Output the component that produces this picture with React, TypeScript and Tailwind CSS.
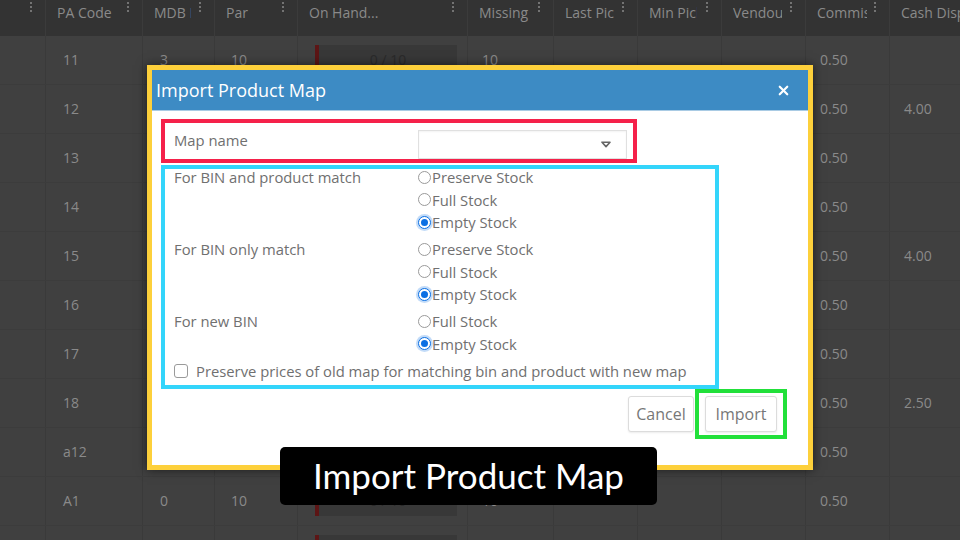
import { X } from 'lucide-react';

interface Row {
  pa: string;
  mdb: string;
  par: string;
  missing: string;
  commission: string;
  cash: string;
}

const rows: Row[] = [
  { pa: '11', mdb: '3', par: '10', missing: '10', commission: '0.50', cash: '' },
  { pa: '12', mdb: '3', par: '10', missing: '10', commission: '0.50', cash: '4.00' },
  { pa: '13', mdb: '3', par: '10', missing: '10', commission: '0.50', cash: '' },
  { pa: '14', mdb: '3', par: '10', missing: '10', commission: '0.50', cash: '' },
  { pa: '15', mdb: '3', par: '10', missing: '10', commission: '0.50', cash: '4.00' },
  { pa: '16', mdb: '3', par: '10', missing: '10', commission: '0.50', cash: '' },
  { pa: '17', mdb: '3', par: '10', missing: '10', commission: '0.50', cash: '' },
  { pa: '18', mdb: '3', par: '10', missing: '10', commission: '0.50', cash: '2.50' },
  { pa: 'a12', mdb: '3', par: '10', missing: '10', commission: '0.50', cash: '' },
  { pa: 'A1', mdb: '0', par: '10', missing: '10', commission: '0.50', cash: '' },
  { pa: 'A2', mdb: '0', par: '10', missing: '10', commission: '0.50', cash: '' },
];

const headers = [
  { label: '', w: 'w-[0px]' },
  { label: 'PA Code', w: 'w-[66px]' },
  { label: 'MDB Line', w: 'w-[37px]' },
  { label: 'Par', w: 'w-[50px]' },
  { label: 'On Hand...', w: 'w-[130px]' },
  { label: 'Missing', w: 'w-[56px]' },
  { label: 'Last Pick', w: 'w-[49px]' },
  { label: 'Min Pick', w: 'w-[48px]' },
  { label: 'Vendout', w: 'w-[49px]' },
  { label: 'Commission', w: 'w-[50px]' },
  { label: 'Cash Dispensed', w: 'w-[90px]' },
];

const gridCols = 'grid grid-cols-[46px_97px_72px_83px_170px_86px_84px_84px_84px_84px_110px]';

const Dots = () => (
  <div className="flex flex-col gap-[2px] pt-[2px]">
    <span className="w-[2px] h-[2px] rounded-full bg-[#8a8a8a]" />
    <span className="w-[2px] h-[2px] rounded-full bg-[#8a8a8a]" />
    <span className="w-[2px] h-[2px] rounded-full bg-[#8a8a8a]" />
  </div>
);

const Radio = ({ checked, label }: { checked?: boolean; label: string }) => (
  <div className="flex items-center h-[22.5px]">
    {checked ? (
      <span className="w-[13px] h-[13px] rounded-full border border-[#0b6fe3] bg-white flex items-center justify-center shadow-[0_0_0_2px_rgba(11,111,227,0.25)]">
        <span className="w-[7px] h-[7px] rounded-full bg-[#0b6fe3]" />
      </span>
    ) : (
      <span className="w-[13px] h-[13px] rounded-full border border-[#9a9a9a] bg-white" />
    )}
    <span className="ml-[1px]">{label}</span>
  </div>
);

const OptionGroup = ({ label, options }: { label: string; options: { label: string; checked?: boolean }[] }) => (
  <div className="flex">
    <div className="w-[244px] leading-[22.5px]">{label}</div>
    <div className="flex flex-col">
      {options.map((o) => (
        <Radio key={o.label} label={o.label} checked={o.checked} />
      ))}
    </div>
  </div>
);

export default function App() {
  return (
    <div className="relative w-[960px] h-[540px] overflow-hidden bg-[#404040] font-['Open_Sans',sans-serif] text-[14px] text-[#8a8a8a]">
      {/* Grid header */}
      <div className={`${gridCols} h-[36px] bg-[#333333]`}>
        {headers.map((h, i) => (
          <div key={i} className="flex justify-between pl-[11px] pr-[13px] border-r border-[#3b3b3b]">
            <div className={`${h.w} overflow-hidden whitespace-nowrap leading-[20px] pt-[3px]`}>{h.label}</div>
            {i < 10 && <Dots />}
          </div>
        ))}
      </div>

      {/* Grid body */}
      {rows.map((r) => (
        <div key={r.pa} className={`${gridCols} h-[49px] border-b border-[#3c3c3c] leading-[20px]`}>
          <div className="border-r border-[#3a3a3a]" />
          <div className="flex items-center pl-[17px] border-r border-[#3a3a3a]">{r.pa}</div>
          <div className="flex items-center pl-[17px] border-r border-[#3a3a3a]">{r.mdb}</div>
          <div className="flex items-center pl-[16px] border-r border-[#3a3a3a]">{r.par}</div>
          <div className="flex items-center pl-[17px] border-r border-[#3a3a3a]">
            <div className="flex h-[30px] w-[142px]">
              <div className="w-[4px] bg-[#5c1515]" />
              <div className="flex-1 bg-[#383838] flex items-center justify-center text-[#2a2a2a]">0 / 10</div>
            </div>
          </div>
          <div className="flex items-center pl-[14px] border-r border-[#3a3a3a]">{r.missing}</div>
          <div className="border-r border-[#3a3a3a]" />
          <div className="border-r border-[#3a3a3a]" />
          <div className="border-r border-[#3a3a3a]" />
          <div className="flex items-center pl-[14px] border-r border-[#3a3a3a]">{r.commission}</div>
          <div className="flex items-center pl-[14px]">{r.cash}</div>
        </div>
      ))}

      {/* Modal dialog */}
      <div className="absolute left-[147px] top-[65px] w-[666px] h-[405px] border-[5px] border-[#fdd03b] bg-white shadow-[0_0_10px_rgba(0,0,0,0.55)] flex flex-col">
        <div className="h-[41px] bg-[#3d8bc4] border-b border-[#a9cbe4] flex items-center justify-between pl-[4px] pr-[17px]">
          <span className="text-[18px] text-white">Import Product Map</span>
          <X className="w-[15px] h-[15px] text-white" strokeWidth={3.5} />
        </div>

        <div className="pl-[9px] pt-[8px] text-[14.8px] text-[#707070]">
          <div className="w-[476px] h-[44px] border-[4px] border-[#f5214a] flex pl-[9px]">
            <div className="w-[244px] self-center pb-[2px]">Map name</div>
            <div className="w-[209px] h-[29px] mt-[7px] border border-[#e0e0e0] shadow-[inset_0_1px_2px_rgba(0,0,0,0.05)] flex items-center justify-end pr-[15px]">
              <svg width="10" height="7" viewBox="0 0 10 7">
                <path d="M1 1.2h8L5 5.6z" fill="none" stroke="#666" strokeWidth="1.6" strokeLinejoin="round" />
              </svg>
            </div>
          </div>

          <div className="mt-[2px] w-[558px] border-[4px] border-[#33d5fb] pl-[9px] pb-[3px]">
            <div className="flex flex-col gap-[4.5px] -mt-[3px]">
              <OptionGroup
                label="For BIN and product match"
                options={[{ label: 'Preserve Stock' }, { label: 'Full Stock' }, { label: 'Empty Stock', checked: true }]}
              />
              <OptionGroup
                label="For BIN only match"
                options={[{ label: 'Preserve Stock' }, { label: 'Full Stock' }, { label: 'Empty Stock', checked: true }]}
              />
              <OptionGroup
                label="For new BIN"
                options={[{ label: 'Full Stock' }, { label: 'Empty Stock', checked: true }]}
              />
              <div className="flex items-center h-[22.5px]">
                <span className="w-[14px] h-[14px] rounded-[3px] border border-[#9a9a9a] bg-white" />
                <span className="ml-[8px]">Preserve prices of old map for matching bin and product with new map</span>
              </div>
            </div>
          </div>
        </div>

        <div className="flex justify-end items-center pr-[21px] mt-[0px]">
          <button className="w-[66px] h-[36px] mr-[1px] bg-white border border-[#dcdcdc] rounded-[3px] shadow-[0_1px_2px_rgba(0,0,0,0.08)] text-[16px] text-[#777]">
            Cancel
          </button>
          <div className="border-[4px] border-[#22e03a] px-[6px] py-[3px]">
            <button className="w-[72px] h-[36px] bg-white border border-[#dcdcdc] rounded-[3px] shadow-[0_1px_2px_rgba(0,0,0,0.08)] text-[16px] text-[#777]">
              Import
            </button>
          </div>
        </div>
      </div>

      {/* Caption */}
      <div className="absolute left-[280px] top-[447px] w-[377px] h-[58px] rounded-[5px] bg-black flex items-center justify-center">
        <span className="font-['Lato',sans-serif] text-[35px] text-white leading-none pb-[2px]">Import Product Map</span>
      </div>
    </div>
  );
}
